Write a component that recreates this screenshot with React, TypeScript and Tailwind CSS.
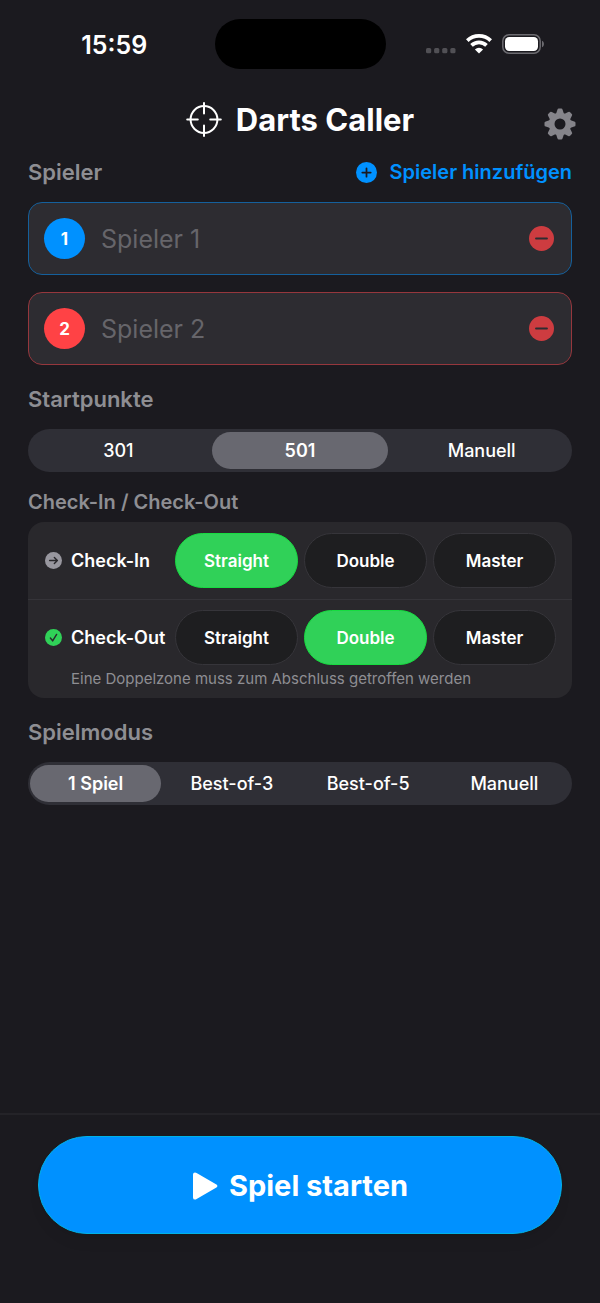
import React, { useState } from "react";

const PLAYER_STYLES = [
  { badge: "bg-[#0091ff]", border: "border-[#15609c]" },
  { badge: "bg-[#ff4245]", border: "border-[#96373d]" },
];

const CHECK_OPTIONS = ["Straight", "Double", "Master"];

const StatusBar: React.FC = () => {
  return (
    <div className="grid grid-cols-[1fr_auto_1fr] items-center px-[28px] pt-[19px]">
      <time className="justify-self-center pt-[2px] pr-[14px] text-[25px] leading-8 font-semibold">15:59</time>
      <div className="h-[50px] w-[171px] rounded-full bg-black" />
      <div className="flex items-center gap-[10px] justify-self-end pr-[28px]">
        <svg width="30" height="20" viewBox="0 0 30 20" fill="#515055" aria-hidden="true">
          <rect x="0" y="14" width="5.2" height="5.2" rx="1.5" />
          <rect x="8.1" y="14" width="5.2" height="5.2" rx="1.5" />
          <rect x="16.2" y="14" width="5.2" height="5.2" rx="1.5" />
          <rect x="24.3" y="14" width="5.2" height="5.2" rx="1.5" />
        </svg>
        <svg width="26" height="20" viewBox="0 0 26 20" fill="none" stroke="#fff" aria-hidden="true">
          <path d="M1.3 6.6a17 17 0 0 1 23.4 0" strokeWidth="3.8" />
          <path d="M5.5 11.4a10.8 10.8 0 0 1 15 0" strokeWidth="3.7" />
          <path d="M8.9 15.4a6 6 0 0 1 8.2 0L13 19.6z" fill="#fff" stroke="none" />
        </svg>
        <svg width="42" height="20" viewBox="0 0 42 20" fill="none" aria-hidden="true">
          <rect x=".8" y=".8" width="37.4" height="18.4" rx="6.2" stroke="#6c6b70" strokeWidth="1.5" />
          <rect x="3" y="3" width="33" height="14" rx="4.2" fill="#fff" />
          <path d="M40 6.8c2.6 1 2.6 5.4 0 6.4z" fill="#6c6b70" />
        </svg>
      </div>
    </div>
  );
};

const TargetIcon: React.FC = () => (
  <svg width="36" height="36" viewBox="0 0 36 36" fill="none" stroke="currentColor" strokeWidth="2" strokeLinecap="round" aria-hidden="true">
    <circle cx="18" cy="17.5" r="13.4" />
    <path d="M18 1v10.4M18 23.6v10.4M1.2 17.5h10.6M24.2 17.5h10.6" />
  </svg>
);

const GearIcon: React.FC = () => (
  <svg width="32" height="32" viewBox="-16 -16 32 32" aria-hidden="true">
    <circle r="8.4" fill="none" stroke="currentColor" strokeWidth="5.8" />
    {[0, 45, 90, 135, 180, 225, 270, 315].map((angle) => (
      <path
        key={angle}
        d="M-4 -10L-2.6 -14.2Q-2.3 -15.5 -1.2 -15.5H1.2Q2.3 -15.5 2.6 -14.2L4 -10Z"
        fill="currentColor"
        transform={`rotate(${angle})`}
      />
    ))}
  </svg>
);

interface DiscIconProps {
  size: number;
  color: string;
  mark: string;
  markColor: string;
}

const DiscIcon: React.FC<DiscIconProps> = ({ size, color, mark, markColor }) => (
  <svg width={size} height={size} viewBox="0 0 24 24" fill="none" className="shrink-0" aria-hidden="true">
    <circle cx="12" cy="12" r="12" fill={color} />
    <path d={mark} stroke={markColor} strokeWidth="2" strokeLinecap="round" strokeLinejoin="round" />
  </svg>
);

interface SegmentedProps {
  label: string;
  options: string[];
  value: string;
  onChange: (value: string) => void;
}

const Segmented: React.FC<SegmentedProps> = ({ label, options, value, onChange }) => {
  return (
    <div role="group" aria-label={label} className="flex h-[43px] gap-[5px] rounded-full bg-[#2f2f36] px-[2px] py-[3px]">
      {options.map((option) => (
        <button
          key={option}
          aria-pressed={option === value}
          onClick={() => onChange(option)}
          className={`flex-1 rounded-full text-[18px] ${
            option === value ? "bg-[#686870] font-semibold" : "font-medium"
          }`}
        >
          {option}
        </button>
      ))}
    </div>
  );
};

interface CheckRowProps {
  label: string;
  icon: React.ReactNode;
  value: string;
  onChange: (value: string) => void;
}

const CheckRow: React.FC<CheckRowProps> = ({ label, icon, value, onChange }) => {
  return (
    <div className="flex items-center">
      <div className="flex w-[130px] shrink-0 items-center gap-[9px] text-[18px] font-semibold">
        {icon}
        <span className="whitespace-nowrap">{label}</span>
      </div>
      <div role="group" aria-label={label} className="grid flex-1 grid-cols-3 gap-[6px]">
        {CHECK_OPTIONS.map((option) => (
          <button
            key={option}
            aria-pressed={option === value}
            onClick={() => onChange(option)}
            className={`h-[55px] rounded-full border pt-[2px] text-[17px] font-semibold ${
              option === value
                ? "border-[#16dc40] bg-[#30d158]"
                : "border-[#36353a] bg-[#1e1e20]"
            }`}
          >
            {option}
          </button>
        ))}
      </div>
    </div>
  );
};

const App: React.FC = () => {
  const [players, setPlayers] = useState(["", ""]);
  const [points, setPoints] = useState("501");
  const [checkIn, setCheckIn] = useState("Straight");
  const [checkOut, setCheckOut] = useState("Double");
  const [mode, setMode] = useState("1 Spiel");

  const rename = (index: number, name: string) =>
    setPlayers(players.map((player, i) => (i === index ? name : player)));

  return (
    <div className="flex min-h-screen flex-col bg-[#1b1a1f] font-['Inter',sans-serif] text-white">
      <StatusBar />

      <header className="mt-[31px] grid grid-cols-[1fr_auto_1fr] items-end px-6">
        <span />
        <div className="flex h-10 items-center gap-[14px]">
          <TargetIcon />
          <h1 className="text-[31px] leading-10 font-bold">Darts Caller</h1>
        </div>
        <button aria-label="Einstellungen" className="justify-self-end text-[#85848a]">
          <GearIcon />
        </button>
      </header>

      <main className="px-7 pt-[17px]">
        <section>
          <div className="flex items-center justify-between">
            <h2 className="text-[22px] leading-[30px] font-semibold text-[#8e8e93]">Spieler</h2>
            <button
              onClick={() => setPlayers([...players, ""])}
              className="flex items-center gap-[13px] text-[20px] leading-[30px] font-semibold text-[#0091ff]"
            >
              <DiscIcon size={21} color="#0091ff" mark="M12 7.2v9.6M7.2 12h9.6" markColor="#1b1a1f" />
              Spieler hinzufügen
            </button>
          </div>
          <ul className="mt-[15px] flex flex-col gap-[17px]">
            {players.map((player, index) => {
              const style = PLAYER_STYLES[index % PLAYER_STYLES.length];
              return (
                <li
                  key={index}
                  className={`flex h-[73px] items-center rounded-[14px] border bg-[#2d2c31] pr-[17px] pl-[15px] ${style.border}`}
                >
                  <span className={`flex size-[41px] shrink-0 items-center justify-center rounded-full pt-[2px] text-[17px] font-bold ${style.badge}`}>
                    {index + 1}
                  </span>
                  <input
                    type="text"
                    aria-label={`Name Spieler ${index + 1}`}
                    placeholder={`Spieler ${index + 1}`}
                    value={player}
                    onChange={(e) => rename(index, e.target.value)}
                    className="min-w-0 flex-1 bg-transparent px-4 pt-[2px] text-[25px] outline-none placeholder:text-[#66656a]"
                  />
                  <button
                    aria-label={`Spieler ${index + 1} entfernen`}
                    onClick={() => setPlayers(players.filter((_, i) => i !== index))}
                  >
                    <DiscIcon size={25} color="#cd3c40" mark="M6.8 12h10.4" markColor="#2d2c31" />
                  </button>
                </li>
              );
            })}
          </ul>
        </section>

        <section className="mt-[19px]">
          <h2 className="mb-[15px] text-[22px] leading-[30px] font-semibold text-[#8e8e93]">Startpunkte</h2>
          <Segmented label="Startpunkte" options={["301", "501", "Manuell"]} value={points} onChange={setPoints} />
        </section>

        <section className="mt-[15px]">
          <h2 className="mb-[5px] text-[20px] leading-[30px] font-semibold text-[#8e8e93]">Check-In / Check-Out</h2>
          <div className="rounded-[16px] bg-[#29282c]">
            <div className="border-b border-[#353439] py-[11px] pr-4 pl-[17px]">
              <CheckRow
                label="Check-In"
                value={checkIn}
                onChange={setCheckIn}
                icon={<DiscIcon size={17} color="#98979f" mark="M6.5 12h11M13.2 7.8l4.3 4.2-4.3 4.2" markColor="#29282c" />}
              />
            </div>
            <div className="pt-[10px] pr-4 pb-[10px] pl-[17px]">
              <CheckRow
                label="Check-Out"
                value={checkOut}
                onChange={setCheckOut}
                icon={<DiscIcon size={17} color="#30d158" mark="M7.6 12.8l3.2 4 5.6-9.2" markColor="#29282c" />}
              />
              <p className="mt-[5px] pl-[26px] text-[15px] leading-[18px] text-[#8e8e93]">
                Eine Doppelzone muss zum Abschluss getroffen werden
              </p>
            </div>
          </div>
        </section>

        <section className="mt-[19px]">
          <h2 className="mb-[15px] text-[22px] leading-[30px] font-semibold text-[#8e8e93]">Spielmodus</h2>
          <Segmented
            label="Spielmodus"
            options={["1 Spiel", "Best-of-3", "Best-of-5", "Manuell"]}
            value={mode}
            onChange={setMode}
          />
        </section>
      </main>

      <footer className="mt-auto border-t-2 border-[#242328] px-[38px] pt-[21px] pb-[69px]">
        <button className="flex h-[98px] w-full items-center justify-center gap-[11px] rounded-full border border-[#00b2e6] bg-[#0091ff] pt-[2px] text-[29px] font-bold shadow-lg shadow-black/5">
          <svg width="26" height="28" viewBox="0 0 26 28" fill="currentColor" aria-hidden="true">
            <path d="M1 2.6Q1 .4 3 .4Q3.8 .4 4.6 .9L24 12.2Q25.4 13 25.4 14T24 15.8L4.6 27.1Q3.8 27.6 3 27.6Q1 27.6 1 25.4Z" />
          </svg>
          Spiel starten
        </button>
      </footer>
    </div>
  );
};

export default App;
